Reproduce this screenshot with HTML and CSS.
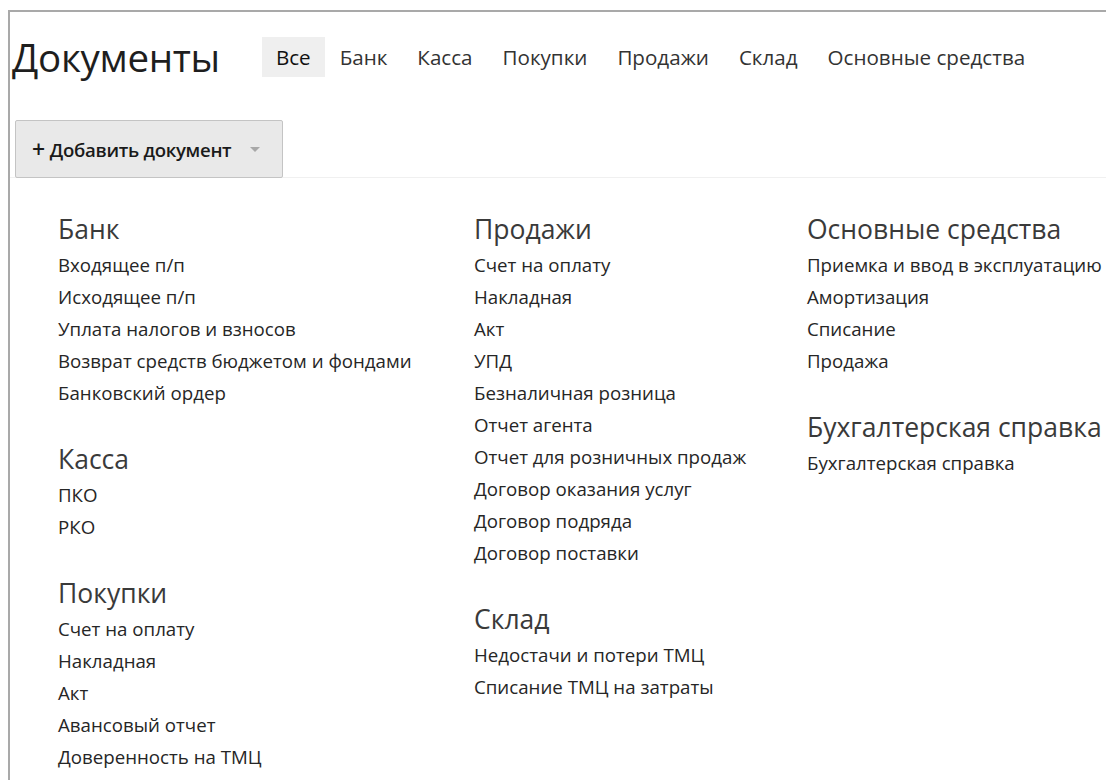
FILE: index.html
```html
<!DOCTYPE html>
<html lang="ru">
<head>
<meta charset="utf-8">
<title>Документы</title>
<link rel="stylesheet" href="styles.css">
</head>
<body>
<div class="frame">
  <header class="head">
    <h1 class="title">Документы</h1>
    <nav class="tabs">
      <a class="tab active">Все</a>
      <a class="tab">Банк</a>
      <a class="tab">Касса</a>
      <a class="tab">Покупки</a>
      <a class="tab">Продажи</a>
      <a class="tab">Склад</a>
      <a class="tab">Основные средства</a>
    </nav>
  </header>

  <div class="toolbar">
    <button class="add-btn"><span class="plus">+</span> Добавить документ <span class="caret"></span></button>
  </div>

  <div class="menu">
    <div class="col col-1">
      <section class="group">
        <h2>Банк</h2>
        <ul>
          <li>Входящее п/п</li>
          <li>Исходящее п/п</li>
          <li>Уплата налогов и взносов</li>
          <li>Возврат средств бюджетом и фондами</li>
          <li>Банковский ордер</li>
        </ul>
      </section>
      <section class="group">
        <h2>Касса</h2>
        <ul>
          <li>ПКО</li>
          <li>РКО</li>
        </ul>
      </section>
      <section class="group">
        <h2>Покупки</h2>
        <ul>
          <li>Счет на оплату</li>
          <li>Накладная</li>
          <li>Акт</li>
          <li>Авансовый отчет</li>
          <li>Доверенность на ТМЦ</li>
        </ul>
      </section>
    </div>
    <div class="col col-2">
      <section class="group">
        <h2>Продажи</h2>
        <ul>
          <li>Счет на оплату</li>
          <li>Накладная</li>
          <li>Акт</li>
          <li>УПД</li>
          <li>Безналичная розница</li>
          <li>Отчет агента</li>
          <li>Отчет для розничных продаж</li>
          <li>Договор оказания услуг</li>
          <li>Договор подряда</li>
          <li>Договор поставки</li>
        </ul>
      </section>
      <section class="group">
        <h2>Склад</h2>
        <ul>
          <li>Недостачи и потери ТМЦ</li>
          <li>Списание ТМЦ на затраты</li>
        </ul>
      </section>
    </div>
    <div class="col col-3">
      <section class="group">
        <h2>Основные средства</h2>
        <ul>
          <li>Приемка и ввод в эксплуатацию</li>
          <li>Амортизация</li>
          <li>Списание</li>
          <li>Продажа</li>
        </ul>
      </section>
      <section class="group">
        <h2>Бухгалтерская справка</h2>
        <ul>
          <li>Бухгалтерская справка</li>
        </ul>
      </section>
    </div>
  </div>
</div>
</body>
</html>
```

FILE: styles.css
```css
html, body {
  margin: 0;
  padding: 0;
  background: #fff;
}

body {
  font-family: "Open Sans", "Noto Sans", sans-serif;
  color: #2b2b2b;
  overflow: hidden;
}

.frame {
  margin: 10px 0 0 8px;
  border-top: 2px solid #a9a9a9;
  border-left: 2px solid #a9a9a9;
  min-height: 780px;
}

/* header: page title and category tabs */
.head {
  display: flex;
  align-items: center;
  padding: 24px 0 0 2px;
}

.title {
  margin: 0;
  font-size: 38.5px;
  font-weight: 400;
  color: #1e1e1e;
  line-height: 42px;
  letter-spacing: -0.3px;
}

.tabs {
  display: flex;
  margin-left: 42px;
}

.tab {
  font-size: 20.6px;
  color: #333;
  padding: 0 15px;
  line-height: 40px;
}

.tab.active {
  background: #efefef;
  color: #111;
  padding: 0 14px;
}

/* toolbar with the add button */
.toolbar {
  margin-top: 42px;
  padding-left: 5px;
  border-bottom: 1px solid #f0f0f0;
  height: 57px;
}

.add-btn {
  display: flex;
  align-items: center;
  width: 268px;
  height: 58px;
  padding: 0 0 0 16px;
  background: #e9e9e9;
  border: 1px solid #c4c4c4;
  border-radius: 2px;
  font-family: inherit;
  font-size: 18.6px;
  font-weight: 600;
  color: #1a1a1a;
  letter-spacing: -0.3px;
}

.plus {
  font-size: 23px;
  font-weight: 600;
  margin-right: 5px;
  line-height: 1;
}

.caret {
  width: 0;
  height: 0;
  margin-left: 19px;
  border-left: 5px solid transparent;
  border-right: 5px solid transparent;
  border-top: 5px solid #a8a8a8;
}

/* dropdown menu with the document types */
.menu {
  display: flex;
  padding: 31px 0 0 48px;
}

.col-1 { width: 416px; }
.col-2 { width: 333px; }
.col-3 { flex: 1; }

.group + .group {
  margin-top: 30px;
}

.group h2 {
  margin: 0;
  font-size: 26.5px;
  font-weight: 400;
  line-height: 40px;
  color: #3a3a3a;
}

.group ul {
  list-style: none;
  margin: 0;
  padding: 0;
}

.group li {
  font-size: 18.7px;
  line-height: 32px;
  color: #262626;
  white-space: nowrap;
}
```
